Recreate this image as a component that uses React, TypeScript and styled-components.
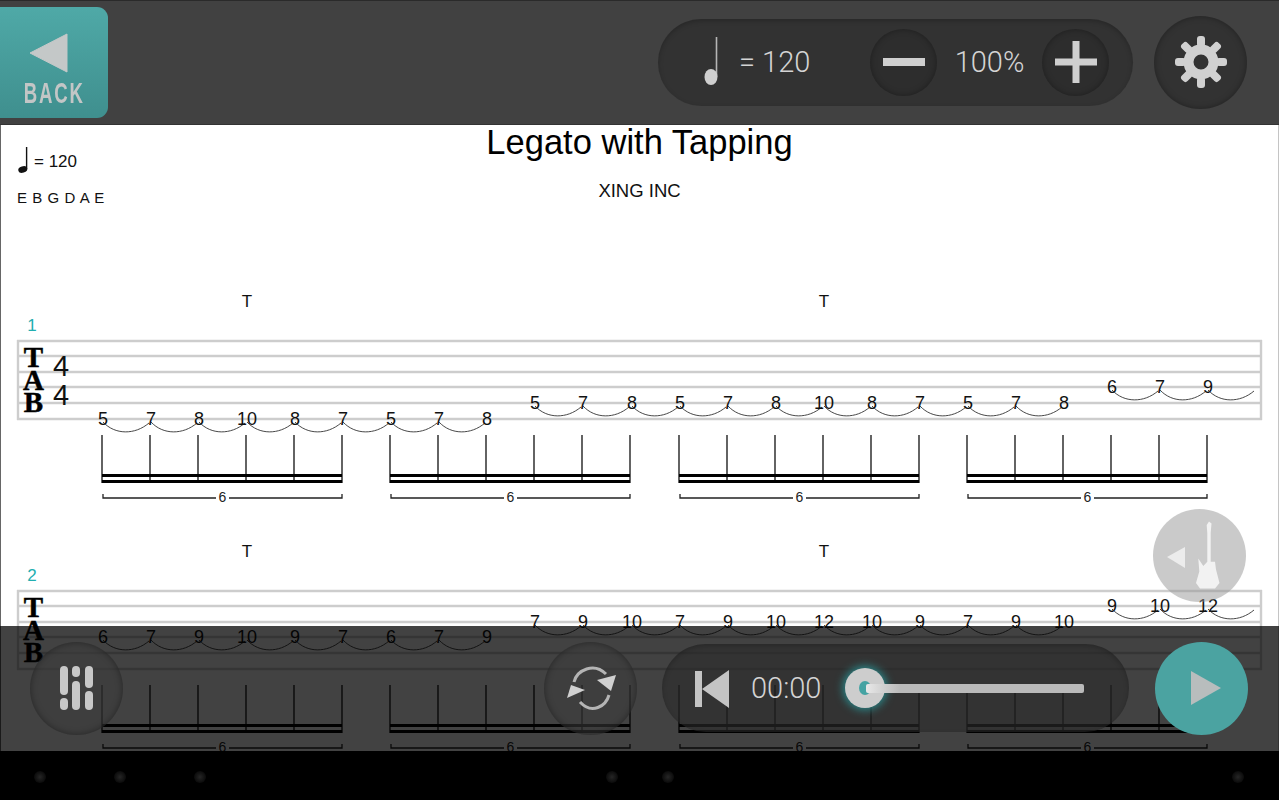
import React from "react";
import styled, { createGlobalStyle } from "styled-components";

const GlobalStyle = createGlobalStyle`
    html, body {
        margin: 0;
        padding: 0;
        background: #000;
    }

    body {
        font-family: "Liberation Sans", Arial, sans-serif;
    }
`;

const Screen = styled.div`
    position: relative;
    display: flex;
    flex-direction: column;
    width: 1279px;
    height: 800px;
    overflow: hidden;
`;

const TopBar = styled.header`
    flex: 0 0 125px;
    box-sizing: border-box;
    display: flex;
    align-items: center;
    justify-content: space-between;
    padding: 0 32px 1px 0;
    background: #414141;
    border-top: 1px solid #2a2a2a;
    border-bottom: 1px solid #333;
`;

const BackButton = styled.button`
    width: 108px;
    height: 111px;
    margin: 1px 0 0;
    padding: 0;
    border: 0;
    border-radius: 0 11px 11px 0;
    background: linear-gradient(#4fa9a7, #3f8f8e);
    display: flex;
    flex-direction: column;
    align-items: center;
    filter: blur(0.5px);
`;

const BackArrow = styled.svg`
    width: 40px;
    height: 40px;
    margin: 26px 10px 0 0;
`;

const BackLabel = styled.span`
    font-weight: 700;
    font-size: 30px;
    line-height: 24px;
    letter-spacing: 3px;
    margin-top: 8px;
    color: #c3c6c6;
    transform: scaleX(0.62);
`;

const TopRight = styled.div`
    display: flex;
    align-items: center;
    gap: 21px;
`;

const Pill = styled.div<{ $width: number; $height: number }>`
    box-sizing: border-box;
    width: ${(p) => p.$width}px;
    height: ${(p) => p.$height}px;
    border-radius: ${(p) => p.$height / 2}px;
    background: rgba(42, 42, 42, 0.62);
    box-shadow: inset 0 2px 5px rgba(0, 0, 0, 0.22);
    display: flex;
    align-items: center;
`;

const RoundButton = styled.div<{ $size: number; $bg?: string }>`
    flex: none;
    width: ${(p) => p.$size}px;
    height: ${(p) => p.$size}px;
    border-radius: 50%;
    background: ${(p) => p.$bg || "rgba(42, 42, 42, 0.62)"};
    box-shadow: ${(p) =>
        p.$bg ? "none" : "inset 0 0 6px rgba(0, 0, 0, 0.35)"};
    display: flex;
    align-items: center;
    justify-content: center;
`;

const Readout = styled.span<{ $width: number; $left?: number; $center?: boolean }>`
    flex: none;
    width: ${(p) => p.$width}px;
    margin-left: ${(p) => p.$left || 0}px;
    text-align: ${(p) => (p.$center ? "center" : "left")};
    font-family: Roboto, sans-serif;
    font-weight: 300;
    font-size: 29px;
    color: #d4d4d4;
    white-space: nowrap;
`;

const Icon = styled.svg`
    display: block;
    flex: none;
    overflow: visible;
    filter: blur(0.6px);
`;

const TempoNote = styled(Icon)`
    margin-left: 41px;
`;

const Score = styled.main`
    flex: 1;
    min-height: 0;
    overflow: hidden;
    background: #fff;
    border-left: 1px solid #666;
    border-right: 1px solid #c4c4c4;
    color: #111;
`;

const ScoreHeader = styled.div`
    height: 160px;
    display: grid;
    grid-template-columns: 1fr auto 1fr;
`;

const ScoreInfo = styled.div`
    padding: 19px 0 0 16px;
`;

const ScoreTempo = styled.div`
    display: flex;
    align-items: center;
    gap: 3px;
    height: 32px;
    font-size: 17px;
`;

const ScoreTempoValue = styled.span`
    margin-top: 4px;
`;

const Tuning = styled.div`
    margin-top: 13px;
    font-size: 15px;
    line-height: 18px;
    letter-spacing: 0.3px;
    word-spacing: 0.5px;
`;

const ScoreTitles = styled.div`
    text-align: center;
`;

const Title = styled.h1`
    margin: 0;
    font-weight: 400;
    font-size: 34.5px;
    line-height: 34px;
    color: #000;
`;

const Author = styled.div`
    margin-top: 21px;
    font-size: 18.5px;
    line-height: 22px;
`;

const SystemSvg = styled.svg`
    display: block;
    margin-left: -1px;
`;

const StaffLine = styled.line`
    stroke: #cdcdcd;
    stroke-width: 2.4;
`;

const Fret = styled.text`
    font-size: 18px;
    text-anchor: middle;
    fill: #111;
`;

const Slur = styled.path`
    fill: none;
    stroke: #333;
    stroke-width: 0.9;
`;

const Stem = styled.line`
    stroke: #222;
    stroke-width: 1.4;
`;

const Beam = styled.line`
    stroke: #000;
    stroke-width: 3;
`;

const Bracket = styled.path`
    fill: none;
    stroke: #222;
    stroke-width: 1.3;
`;

const TupletNumber = styled.text`
    font-size: 14px;
    text-anchor: middle;
    fill: #222;
`;

const TapMark = styled.text`
    font-size: 17px;
    text-anchor: middle;
    fill: #111;
`;

const MeasureNumber = styled.text`
    font-size: 17px;
    text-anchor: middle;
    fill: #22aeb0;
`;

const ClefLetter = styled.text`
    font-family: "Liberation Serif", serif;
    font-weight: 700;
    font-size: 29px;
    text-anchor: middle;
    fill: #000;
    stroke: #000;
    stroke-width: 0.5;
`;

const MeterDigit = styled.text`
    font-size: 29px;
    text-anchor: middle;
    fill: #111;
`;

const GuitarButton = styled(RoundButton)`
    position: absolute;
    left: 1153px;
    top: 509px;
`;

const BottomBar = styled.footer`
    position: absolute;
    left: 0;
    top: 626px;
    width: 1279px;
    height: 125px;
    box-sizing: border-box;
    padding: 0 31px 1px 30px;
    display: flex;
    align-items: center;
    background: rgba(0, 0, 0, 0.74);
`;

const SoftButton = styled(RoundButton)`
    background: rgba(60, 60, 60, 0.55);
    box-shadow: inset 0 0 7px rgba(0, 0, 0, 0.4);
`;

const LoopButton = styled(SoftButton)`
    margin-left: auto;
    margin-right: 25px;
`;

const LoopIconWrap = styled.div`
    margin-right: 4px;
`;

const PlayButton = styled(RoundButton)`
    margin-left: 26px;
`;

const PlayIcon = styled(Icon)`
    margin-left: 9px;
`;

const SkipIcon = styled(Icon)`
    margin: 2px 0 0 33px;
`;

const SliderBox = styled.div`
    position: relative;
    flex: none;
    width: 239px;
    height: 40px;
    margin-left: 25px;
    display: flex;
    align-items: center;
    justify-content: flex-end;
`;

const SliderTrack = styled.div`
    position: relative;
    z-index: 1;
    width: 218px;
    height: 9px;
    border-radius: 2px;
    background: linear-gradient(90deg, #e8e8e8, #bababa 34px);
`;

const SliderThumb = styled.div`
    position: absolute;
    left: 0;
    top: 0;
    width: 40px;
    height: 40px;
    border-radius: 50%;
    background: #cdcdcd;
    box-shadow: 0 0 8px 2px #2a8a8c;
    display: flex;
    align-items: center;
    justify-content: center;

    &::after {
        content: "";
        width: 12px;
        height: 14px;
        border-radius: 50%;
        background: #45a3a3;
    }
`;

const NavBar = styled.nav`
    flex: 0 0 49px;
    position: relative;
    background: #000;
`;

const NavDot = styled.span<{ $x: number }>`
    position: absolute;
    left: ${(p) => p.$x - 6}px;
    top: 20px;
    width: 12px;
    height: 12px;
    border-radius: 50%;
    background: radial-gradient(circle, #262626 0, #161616 40%, #000 100%);
`;

type Note = { fret: number; y: number };

const NOTE_X = [
    103, 151, 199, 247, 295, 343, 391, 439, 487, 535, 583, 632, 680, 728, 776,
    824, 872, 920, 968, 1016, 1064, 1112, 1160, 1208,
];

const STAFF_Y = [56, 71, 87, 102, 118, 134];

// each lick moves one string up: first nine notes, next twelve, last three
const toNotes = (frets: number[], lowString: number): Note[] =>
    frets.map((fret, i) => ({
        fret,
        y: STAFF_Y[i < 9 ? lowString : i < 21 ? lowString - 1 : lowString - 2],
    }));

const SYSTEMS = [
    {
        number: 1,
        notes: toNotes(
            [5, 7, 8, 10, 8, 7, 5, 7, 8, 5, 7, 8, 5, 7, 8, 10, 8, 7, 5, 7, 8, 6, 7, 9],
            5,
        ),
    },
    {
        number: 2,
        notes: toNotes(
            [6, 7, 9, 10, 9, 7, 6, 7, 9, 7, 9, 10, 7, 9, 10, 12, 10, 9, 7, 9, 10, 9, 10, 12],
            3,
        ),
    },
];

const SLUR_BREAKS = [8, 20];
const GROUPS = [
    [102, 342],
    [390, 630],
    [679, 919],
    [967, 1207],
];

function System({ number, notes }: { number: number; notes: Note[] }) {
    return (
        <SystemSvg width="1279" height="250" viewBox="0 0 1279 250">
            <TapMark x="247" y="21.5">T</TapMark>
            <TapMark x="824" y="21.5">T</TapMark>
            <MeasureNumber x="32" y="46">{number}</MeasureNumber>

            {STAFF_Y.map((y) => (
                <StaffLine key={y} x1="17" x2="1262" y1={y} y2={y} />
            ))}
            <StaffLine x1="18" x2="18" y1="55" y2="135" />
            <StaffLine x1="1261" x2="1261" y1="55" y2="135" />

            <ClefLetter x="33.5" y="82">T</ClefLetter>
            <ClefLetter x="33.5" y="105">A</ClefLetter>
            <ClefLetter x="33.5" y="127">B</ClefLetter>
            {number === 1 && (
                <>
                    <MeterDigit x="61" y="91">4</MeterDigit>
                    <MeterDigit x="61" y="120">4</MeterDigit>
                </>
            )}

            {notes.map((note, i) => {
                const x = NOTE_X[i];
                const { y } = note;
                return (
                    <g key={i}>
                        <Fret x={x} y={y + 6}>{note.fret}</Fret>
                        {!SLUR_BREAKS.includes(i) && (
                            <Slur
                                d={`M${x} ${y + 3}C${x + 12} ${y + 16} ${x + 32} ${y + 16} ${x + 46} ${y + 4}`}
                            />
                        )}
                    </g>
                );
            })}

            {GROUPS.map(([start, end]) => {
                const stems = [0, 1, 2, 3, 4, 5].map(
                    (n) => start + ((end - start) / 5) * n,
                );
                const middle = (start + end) / 2;
                return (
                    <g key={start}>
                        {stems.map((x) => (
                            <Stem key={x} x1={x} x2={x} y1="150" y2="198" />
                        ))}
                        <Beam x1={start} x2={end} y1="190.5" y2="190.5" />
                        <Beam x1={start} x2={end} y1="196.5" y2="196.5" />
                        <Bracket
                            d={`M${start + 1} 209v4H${middle - 6}M${middle + 7} 213H${end}v-4`}
                        />
                        <TupletNumber x={middle + 0.5} y="217">6</TupletNumber>
                    </g>
                );
            })}
        </SystemSvg>
    );
}

function QuarterNote({ color }: { color: string }) {
    return (
        <svg width="14" height="28" viewBox="0 0 14 28">
            <path d="M9.6 1v22" stroke={color} strokeWidth="1.4" />
            <ellipse
                cx="5.8"
                cy="23.5"
                rx="4.6"
                ry="3.2"
                fill={color}
                transform="rotate(-18 5.8 23.5)"
            />
        </svg>
    );
}

function GearIcon() {
    const teeth = [0, 45, 90, 135, 180, 225, 270, 315];
    return (
        <Icon width="54" height="54" viewBox="0 0 54 54">
            <circle cx="27" cy="27" r="12.5" fill="none" stroke="#d0d0d0" strokeWidth="10" />
            {teeth.map((deg) => (
                <rect
                    key={deg}
                    x="23"
                    y="1"
                    width="8"
                    height="11"
                    rx="3"
                    fill="#d0d0d0"
                    transform={`rotate(${deg} 27 27)`}
                />
            ))}
        </Icon>
    );
}

function MixerIcon() {
    const bars = [
        [0, 0, 29],
        [0, 32, 12],
        [12, 0, 11],
        [12, 15, 29],
        [25, 0, 22],
        [25, 25, 19],
    ];
    return (
        <Icon width="33" height="44" viewBox="0 0 33 44">
            {bars.map(([x, y, h]) => (
                <rect key={`${x}-${y}`} x={x} y={y} width="8" height={h} rx="4" fill="#c8c8c8" />
            ))}
        </Icon>
    );
}

function LoopIcon() {
    return (
        <Icon width="50" height="52" viewBox="0 0 50 52">
            <path d="M10 20C13 8 30 0 42 12" fill="none" stroke="#b4b4b4" strokeWidth="3" />
            <path d="M45 33C42 44 28 53 16 40" fill="none" stroke="#b4b4b4" strokeWidth="3" />
            <path d="M33 18L52 13L47 29Z" fill="#d0d0d0" />
            <path d="M21 28L7 23L3 36Z" fill="#d0d0d0" />
        </Icon>
    );
}

function GuitarIcon() {
    return (
        <svg width="93" height="93" viewBox="0 0 93 93">
            <path d="M14 48L32 38V59Z" fill="#ececec" />
            <path
                d="M56 12.5L58.5 14.5L57.7 24V52.7L62 52.7L63 60.5L66.5 74L62 79.5H47L43 74L46.3 62.5L45.3 49.5L50.3 57L54.3 52.7V24L53.7 16Z"
                fill="#f2f2f2"
            />
        </svg>
    );
}

export default function App() {
    return (
        <Screen>
            <GlobalStyle />
            <TopBar>
                <BackButton>
                    <BackArrow viewBox="0 0 40 40">
                        <path d="M1 20L38 1V39Z" fill="#c4c8c8" stroke="#c4c8c8" strokeLinejoin="round" />
                    </BackArrow>
                    <BackLabel>BACK</BackLabel>
                </BackButton>
                <TopRight>
                    <Pill $width={475} $height={87}>
                        <TempoNote width="24" height="50" viewBox="0 0 24 50">
                            <path d="M17.5 0V40" stroke="#b5b5b5" strokeWidth="1.6" />
                            <ellipse cx="12" cy="40" rx="6.5" ry="8" fill="#cfcfcf" />
                        </TempoNote>
                        <Readout $width={131} $left={16}>= 120</Readout>
                        <RoundButton $size={67}>
                            <Icon width="42" height="8" viewBox="0 0 42 8">
                                <rect width="42" height="8" fill="#cfcfcf" />
                            </Icon>
                        </RoundButton>
                        <Readout $width={105} $center>100%</Readout>
                        <RoundButton $size={67}>
                            <Icon width="42" height="42" viewBox="0 0 42 42">
                                <path d="M17.5 0h7v17.5H42v7H24.5V42h-7V24.5H0v-7h17.5z" fill="#cfcfcf" />
                            </Icon>
                        </RoundButton>
                    </Pill>
                    <RoundButton $size={93}>
                        <GearIcon />
                    </RoundButton>
                </TopRight>
            </TopBar>

            <Score>
                <ScoreHeader>
                    <ScoreInfo>
                        <ScoreTempo>
                            <QuarterNote color="#111" />
                            <ScoreTempoValue>= 120</ScoreTempoValue>
                        </ScoreTempo>
                        <Tuning>E B G D A E</Tuning>
                    </ScoreInfo>
                    <ScoreTitles>
                        <Title>Legato with Tapping</Title>
                        <Author>XING INC</Author>
                    </ScoreTitles>
                </ScoreHeader>
                {SYSTEMS.map((system) => (
                    <System key={system.number} {...system} />
                ))}
            </Score>

            <GuitarButton $size={93} $bg="rgba(150, 150, 150, 0.5)">
                <GuitarIcon />
            </GuitarButton>

            <BottomBar>
                <SoftButton $size={93}>
                    <MixerIcon />
                </SoftButton>
                <LoopButton $size={93}>
                    <LoopIconWrap>
                        <LoopIcon />
                    </LoopIconWrap>
                </LoopButton>
                <Pill $width={467} $height={88}>
                    <SkipIcon width="34" height="38" viewBox="0 0 34 38">
                        <path d="M0 1h7v36H0zM7 19L34 0V38Z" fill="#c4c4c4" />
                    </SkipIcon>
                    <Readout $width={69} $left={22}>00:00</Readout>
                    <SliderBox>
                        <SliderTrack />
                        <SliderThumb />
                    </SliderBox>
                </Pill>
                <PlayButton $size={93} $bg="#4ba3a1">
                    <PlayIcon width="30" height="34" viewBox="0 0 30 34">
                        <path d="M0 0L30 17L0 34Z" fill="#b8bdbd" />
                    </PlayIcon>
                </PlayButton>
            </BottomBar>

            <NavBar>
                {[40, 120, 200, 612, 668, 1238].map((x) => (
                    <NavDot key={x} $x={x} />
                ))}
            </NavBar>
        </Screen>
    );
}
